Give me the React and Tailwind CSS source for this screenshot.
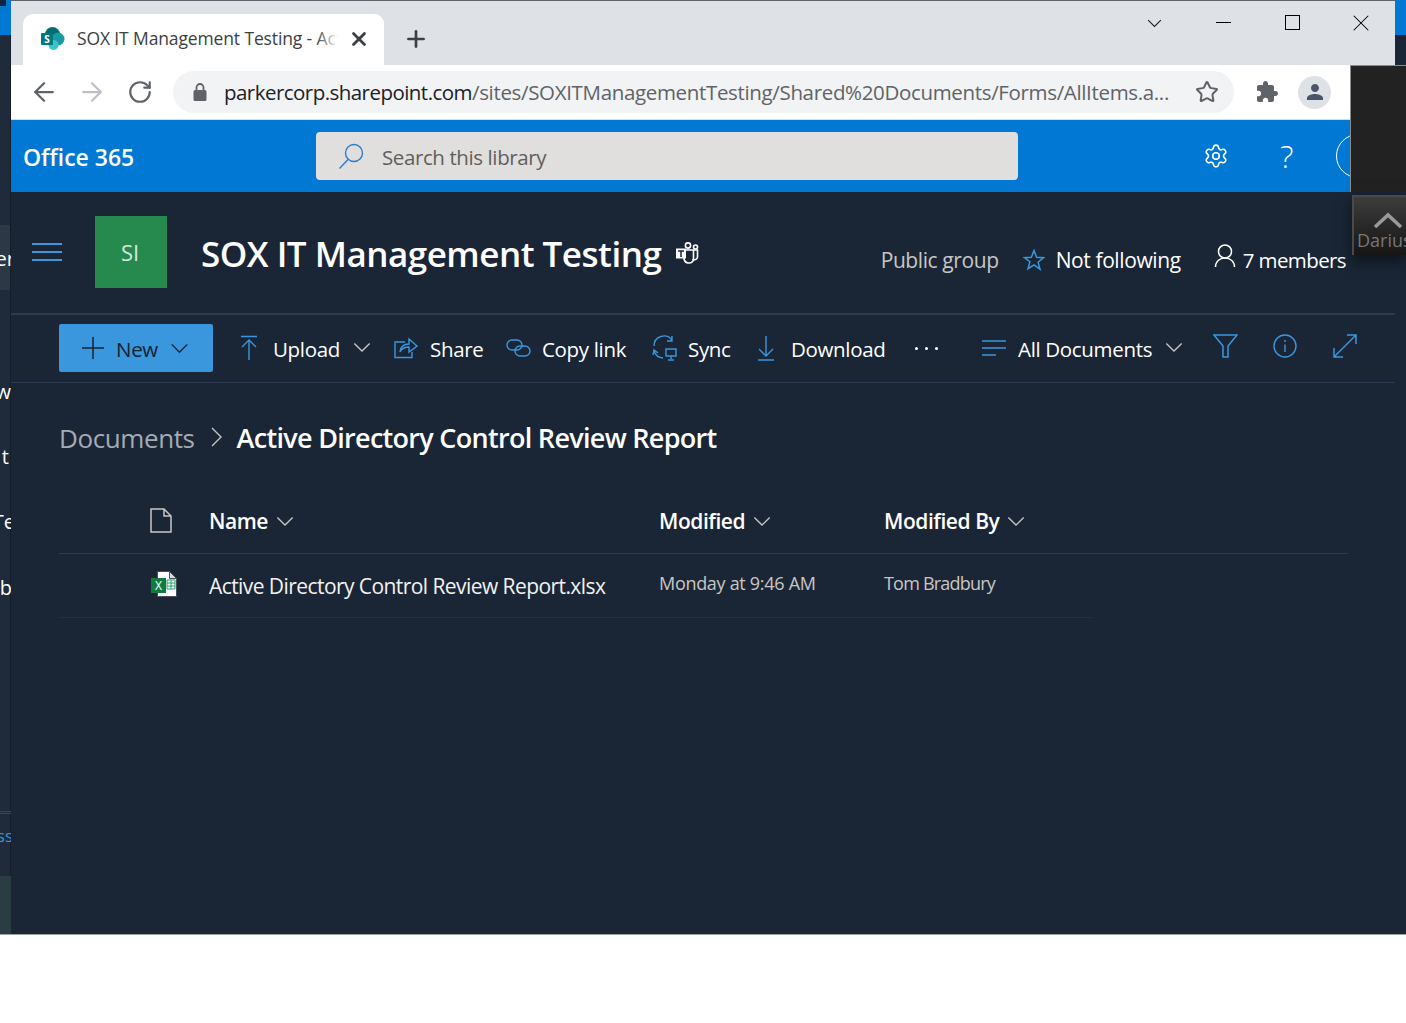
import { ArrowLeft, ArrowRight, RotateCw, Star, X, Plus, Settings } from "lucide-react"

const Chevron = ({ className = "" }) => (
  <svg viewBox="0 0 20 12" fill="none" stroke="currentColor" strokeWidth="1.5" className={className}>
    <path d="M1.5 1.5L10 10l8.5-8.5" />
  </svg>
)

const SharePointIcon = () => (
  <svg width="25" height="25" viewBox="0 0 25 25">
    <circle cx="12.5" cy="8.5" r="7.5" fill="#036c70" />
    <circle cx="18" cy="13" r="6.5" fill="#1a9ba1" />
    <circle cx="13.5" cy="19" r="5" fill="#37c6d0" />
    <rect x="1" y="7" width="12" height="12" rx="1" fill="#03787c" />
    <text x="7" y="16.5" fontSize="10" fontWeight="700" textAnchor="middle" fill="#fff" fontFamily="Open Sans">S</text>
  </svg>
)

const TeamsIcon = () => (
  <svg width="25" height="24" viewBox="0 0 25 24" fill="none" stroke="#fff" strokeWidth="1.6">
    <circle cx="13" cy="4.5" r="2.6" />
    <circle cx="20.5" cy="6" r="2" />
    <path d="M8 9h14.500v7a3 3 0 0 1-5 2" />
    <path d="M9 11v7a5 5 0 0 0 9.500 1V9" />
    <rect x="1" y="7.500" width="10" height="10" fill="#fff" stroke="none" />
    <path d="M3 10h6M6 10v6" stroke="#1a2636" strokeWidth="1.500" />
  </svg>
)

const ExcelIcon = () => (
  <svg width="28" height="27" viewBox="0 0 28 27">
    <path d="M7.500 .5h12l7 7v18h-19z" fill="#fff" stroke="#4a4f57" strokeWidth="1" />
    <path d="M19.500 .5v7h7z" fill="#d8dadd" stroke="#4a4f57" strokeWidth="1" />
    <path d="M17 9h8v9h-8z" fill="none" stroke="#21a366" strokeWidth="1" />
    <path d="M17 12h8M17 15h8M21 9v9" stroke="#21a366" strokeWidth="1" />
    <rect x="1" y="7" width="15" height="15" fill="#107c41" />
    <text x="8.500" y="19" fontSize="12" textAnchor="middle" fill="#fff" fontFamily="Open Sans">X</text>
  </svg>
)

const CommandItem = ({ icon, label, className, iconBox, chevron }) => (
  <div className={`flex items-center shrink-0 h-12 relative ${className}`}>
    <div className={`flex justify-start ${iconBox}`}>{icon}</div>
    <span className="mt-[2px] text-white text-[20.500px] tracking-[-0.33px] whitespace-nowrap">{label}</span>
    {chevron}
  </div>
)

const HeaderCell = ({ label, className = "" }) => (
  <div className={`flex items-center gap-[8px] shrink-0 ${className}`}>
    <span className="text-white text-[21px] font-semibold tracking-[-0.45px]">{label}</span>
    <Chevron className="w-[18px] h-[11px] text-[#c8c6c4]" />
  </div>
)

const App = () => {
  return (
    <div className="relative w-[1406px] h-[1023px] bg-white overflow-hidden font-['Open_Sans','Noto_Sans',sans-serif]">
      <div className="flex h-[935px] border-b border-[#9aa0a6]">

        {/* window behind, left edge */}
        <div className="relative w-[11px] shrink-0 bg-[#1f2b3a] overflow-hidden">
          <div className="h-[35px] bg-[#0078d4]" />
          <div className="absolute top-0 left-0 w-[6px] h-[6px] bg-[#10243c]" />
          <div className="absolute top-[225px] left-0 w-full h-[65px] bg-[#2c3845]" />
          <div className="absolute top-[35px] bottom-0 right-0 w-px bg-[#141d29]" />
          <span className="absolute top-[246px] -right-[4px] text-white text-[20px] leading-[26px]">er</span>
          <span className="absolute top-[379px] right-0 text-white text-[20px] leading-[26px]">w</span>
          <span className="absolute top-[444px] right-[2px] text-white text-[20px] leading-[26px]">t</span>
          <span className="absolute top-[509px] -right-[4px] text-white text-[20px] leading-[26px]">Te</span>
          <span className="absolute top-[575px] -right-[1px] text-white text-[20px] leading-[26px]">b</span>
          <div className="absolute top-[811px] left-0 w-full h-[3px] border-y border-[#3a4654]" />
          <span className="absolute top-[826px] -right-[2px] text-[#3a96dd] text-[17px] leading-[20px]">ss</span>
          <div className="absolute top-[876px] left-0 w-full h-[58px] bg-[#2a3d42]" />
        </div>

        {/* browser window */}
        <div className="w-[1384px] shrink-0 flex flex-col overflow-hidden border-t border-[#5f6368]">

          {/* tab strip */}
          <div className="h-[64px] bg-[#dee1e6] flex items-end pl-3 shrink-0">
            <div className="relative w-[361px] h-[51px] bg-white rounded-t-[10px] flex items-center pl-[17px] pb-[2px] overflow-hidden">
              <SharePointIcon />
              <span className="ml-3 text-[17.500px] text-[#3c4043] whitespace-nowrap tracking-[-0.13px]">SOX IT Management Testing - Active</span>
              <div className="absolute right-0 top-0 h-full w-[46px] flex items-center bg-white">
                <div className="w-[22px] h-full bg-gradient-to-r from-transparent to-white -ml-[22px] shrink-0" />
                <X size={22} strokeWidth={3} className="text-[#3c4043] ml-[10px] mb-[2px] shrink-0" />
              </div>
            </div>
            <div className="h-[51px] flex items-center pl-[19px] pb-[2px]">
              <Plus size={26} strokeWidth={2.500} className="text-[#3c4043]" />
            </div>
            <div className="flex-1 h-full flex items-start justify-end pt-[14px]">
              <Chevron className="w-[15px] h-[9px] mt-[4px] text-[#202124] mr-[54px]" />
              <div className="w-[15px] h-px bg-black mt-[7px] mr-[54px]" />
              <div className="w-[15px] h-[15px] border border-black mr-[47px]" />
              <X size={28} strokeWidth={0.900} className="text-black mr-[20px] -mt-[6px]" />
            </div>
          </div>

          {/* address bar */}
          <div className="h-[55px] bg-white border-b border-[#dadce0] flex items-center shrink-0">
            <ArrowLeft size={30} strokeWidth={1.800} className="text-[#5f6368] ml-[18px] shrink-0" />
            <ArrowRight size={30} strokeWidth={1.800} className="text-[#bdc1c6] ml-[18px] shrink-0" />
            <RotateCw size={26} strokeWidth={2} className="text-[#5f6368] ml-[20px] shrink-0" />
            <div className="ml-[20px] w-[1061px] h-[42px] rounded-full bg-[#f1f3f4] flex items-center pl-[20px] overflow-hidden shrink-0">
              <svg width="14" height="18" viewBox="0 0 14 18" fill="#5f6368" className="shrink-0">
                <path d="M2 7h10a1.500 1.500 0 0 1 1.500 1.500v8A1.500 1.500 0 0 1 12 18H2a1.500 1.500 0 0 1-1.500-1.500v-8A1.500 1.500 0 0 1 2 7z" />
                <path d="M3.500 7V4.500a3.500 3.500 0 0 1 7 0V7" fill="none" stroke="#5f6368" strokeWidth="1.800" />
              </svg>
              <span className="ml-[17px] w-[947px] text-[20.500px] whitespace-nowrap overflow-hidden">
                <span className="text-[#202124] tracking-[-0.54px]">parkercorp.sharepoint.com</span>
                <span className="text-[#5f6368] tracking-[-0.34px]">/sites/SOXITManagementTesting/Shared%20Documents/Forms/AllItems.a...</span>
              </span>
              <Star size={24} strokeWidth={2} className="text-[#5f6368] ml-[24px] shrink-0" />
            </div>
            <svg width="24" height="24" viewBox="0 0 24 24" fill="#5f6368" className="ml-[21px] shrink-0">
              <path d="M20.500 11H19V7c0-1.100-.9-2-2-2h-4V3.500C13 2.120 11.880 1 10.500 1S8 2.120 8 3.500V5H4c-1.100 0-1.990.9-1.990 2v3.800H3.500c1.490 0 2.700 1.210 2.700 2.700s-1.210 2.700-2.700 2.700H2V20c0 1.100.9 2 2 2h3.800v-1.500c0-1.490 1.210-2.700 2.700-2.700 1.490 0 2.700 1.210 2.700 2.700V22H17c1.100 0 2-.9 2-2v-4h1.500c1.380 0 2.500-1.120 2.500-2.500S21.880 11 20.500 11z" />
            </svg>
            <div className="ml-[19px] w-[33px] h-[33px] rounded-full bg-[#dee1e6] flex items-center justify-center shrink-0">
              <svg width="24" height="24" viewBox="0 0 24 24" fill="#4a5568">
                <path d="M12 12c2.210 0 4-1.790 4-4s-1.790-4-4-4-4 1.790-4 4 1.790 4 4 4zm0 2c-2.670 0-8 1.340-8 4v2h16v-2c0-2.660-5.330-4-8-4z" />
              </svg>
            </div>
          </div>

          {/* office bar */}
          <div className="h-[72px] bg-[#0078d4] flex items-center shrink-0">
            <span className="ml-3 mt-[2px] w-[293px] text-white text-[23px] font-semibold">Office 365</span>
            <div className="w-[702px] h-12 bg-[#e1dfdd] rounded-[4px] flex items-center pl-[22px] shrink-0">
              <svg width="27" height="27" viewBox="0 0 27 27" fill="none" stroke="#2b7cd3" strokeWidth="1.400">
                <circle cx="16" cy="10" r="8.500" />
                <path d="M10 16.500L1.500 25.500" />
              </svg>
              <span className="ml-[17px] mt-[2px] text-[20.500px] text-[#605e5c] tracking-[-0.4px]">Search this library</span>
            </div>
            <Settings size={26} strokeWidth={1.500} className="text-white ml-[185px] shrink-0" />
            <span className="ml-[51px] w-[24px] text-white text-[32px] font-light shrink-0">?</span>
            <div className="ml-[32px] w-[44px] h-[44px] rounded-full border border-white shrink-0" />
          </div>

          {/* dark content */}
          <div className="flex-1 bg-[#1a2636] flex flex-col min-h-0">

            {/* site header */}
            <div className="h-[123px] flex items-center border-b-2 border-[#2b3a4e] shrink-0 pb-[1px]">
              <div className="ml-[21px] w-[30px] flex flex-col gap-[6px] shrink-0">
                <div className="h-[2px] bg-[#3a96dd]" />
                <div className="h-[2px] bg-[#3a96dd]" />
                <div className="h-[2px] bg-[#3a96dd]" />
              </div>
              <div className="ml-[33px] w-[72px] h-[72px] bg-[#268a4f] flex items-center justify-center text-[#d5e8dc] text-[22px] shrink-0 pr-[2px]">SI</div>
              <span className="ml-[34px] mt-[4px] text-white text-[35px] font-semibold tracking-[-0.5px] whitespace-nowrap">SOX IT Management Testing</span>
              <div className="ml-[14px] mt-[2px] shrink-0"><TeamsIcon /></div>
              <div className="flex-1" />
              <span className="text-[#c8c6c4] text-[21px] tracking-[-0.4px] mt-[17px] whitespace-nowrap">Public group</span>
              <svg width="22" height="22" viewBox="0 0 22 22" fill="none" stroke="#3a96dd" strokeWidth="1.500" className="ml-[24px] mt-[15px] shrink-0">
                <path d="M11 1.500l2.600 6.800 7 .4-5.500 4.500 1.900 7L11 15.800l-6 3.900 1.900-7L1.400 8.700l7-.4z" />
              </svg>
              <span className="ml-[11px] mr-[1px] text-white text-[21px] tracking-[-0.4px] mt-[17px] whitespace-nowrap">Not following</span>
              <svg width="22" height="24" viewBox="0 0 22 24" fill="none" stroke="#fff" strokeWidth="1.500" className="ml-[32px] mt-[8px] shrink-0">
                <circle cx="11" cy="7.500" r="6.500" />
                <path d="M1.500 23c0-5.500 4-9 9.500-9s9.500 3.500 9.500 9" />
              </svg>
              <span className="ml-[7px] mr-[49px] text-white text-[20.500px] tracking-[-0.6px] mt-[17px] whitespace-nowrap">7 members</span>
            </div>

            {/* command bar */}
            <div className="h-[68px] flex items-center border-b border-[#2b3a4e] shrink-0 pl-[48px] pb-[1px]">
              <div className="w-[154px] h-12 bg-[#3a96dd] rounded-[2px] flex items-center pl-[23px] text-[#152233] shrink-0">
                <svg width="22" height="22" viewBox="0 0 22 22" fill="none" stroke="currentColor" strokeWidth="1.500" className="shrink-0"><path d="M11 0v22M0 11h22" /></svg>
                <span className="ml-[12px] mt-[2px] text-[20.500px] tracking-[-0.3px]">New</span>
                <Chevron className="w-[19px] h-[11px] ml-[12px]" />
              </div>
              <div className="w-[27px] shrink-0" />
              <CommandItem className="w-[154px]" iconBox="w-[33px]" label="Upload" icon={
                <svg width="18" height="26" viewBox="0 0 18 26" fill="none" stroke="#3a96dd" strokeWidth="1.400"><path d="M1 1.500h16M9 25V5M2 12l7-7 7 7" /></svg>
              } chevron={<Chevron className="absolute left-[113px] top-[18px] w-[18px] h-[11px] text-[#c8c6c4]" />} />
              <CommandItem className="w-[112px]" iconBox="w-[36px]" label="Share" icon={
                <svg width="24" height="22" viewBox="0 0 24 22" fill="none" stroke="#3a96dd" strokeWidth="1.400"><path d="M11 5H1v15.500h17V15" /><path d="M6 15c0-5 4-8 9-8V2l8 7-8 6v-5c-4 0-7 1-9 5z" /></svg>
              } />
              <CommandItem className="w-[146px]" iconBox="w-[36px]" label="Copy link" icon={
                <svg width="25" height="18" viewBox="0 0 25 18" fill="none" stroke="#3a96dd" strokeWidth="1.400"><rect x="1" y="1" width="15" height="10" rx="5" /><rect x="9" y="7" width="15" height="10" rx="5" /></svg>
              } />
              <CommandItem className="w-[105px]" iconBox="w-[36px]" label="Sync" icon={
                <svg width="26" height="26" viewBox="0 0 26 26" fill="none" stroke="#3a96dd" strokeWidth="1.400"><path d="M2 11a10 10 0 0 1 18-6M20 1v5h-5M11 23A10 10 0 0 1 2 16M1 20l1-5 4 3" /><path d="M14 14h10v7H14zM19 21v3M16 25h6" /></svg>
              } />
              <CommandItem className="w-[158px]" iconBox="w-[34px]" label="Download" icon={
                <svg width="18" height="26" viewBox="0 0 18 26" fill="none" stroke="#3a96dd" strokeWidth="1.400"><path d="M1 25h16M9 1v20M2 14l7 7 7-7" /></svg>
              } />
              <div className="w-[67px] shrink-0 flex gap-[7px] items-center">
                <div className="w-[3px] h-[3px] rounded-full bg-white" />
                <div className="w-[3px] h-[3px] rounded-full bg-white" />
                <div className="w-[3px] h-[3px] rounded-full bg-white" />
              </div>
              <CommandItem className="w-[231px]" iconBox="w-[36px]" label="All Documents" icon={
                <svg width="24" height="16" viewBox="0 0 24 16" fill="none" stroke="#3a96dd" strokeWidth="1.500"><path d="M0 1h24M0 8h24M0 15h14" /></svg>
              } chevron={<Chevron className="absolute left-[183px] top-[18px] w-[18px] h-[11px] text-[#c8c6c4]" />} />
              <svg width="25" height="24" viewBox="0 0 25 24" fill="none" stroke="#3a96dd" strokeWidth="1.500" className="shrink-0 -mt-1"><path d="M1 1h23l-9 11v11h-5V12z" /></svg>
              <svg width="24" height="24" viewBox="0 0 24 24" fill="none" stroke="#3a96dd" strokeWidth="1.400" className="shrink-0 ml-[35px] -mt-1"><circle cx="12" cy="12" r="11" /><path d="M12 10.500V18M12 6v2" /></svg>
              <svg width="24" height="24" viewBox="0 0 24 24" fill="none" stroke="#3a96dd" strokeWidth="1.500" className="shrink-0 ml-[36px] -mt-1"><path d="M1 23L23 1M14 1h9v9M1 14v9h9" /></svg>
            </div>

            {/* breadcrumb */}
            <div className="h-[107px] flex items-center pl-[48px] pt-[3px] shrink-0">
              <span className="text-[#a3abb5] text-[26px] tracking-[-0.4px]">Documents</span>
              <svg width="11" height="20" viewBox="0 0 11 20" fill="none" stroke="#c8c6c4" strokeWidth="1.400" className="ml-[16px] -mt-[2px] shrink-0"><path d="M1 1l9 9-9 9" /></svg>
              <span className="ml-[15px] text-white text-[27px] font-semibold tracking-[-0.7px] whitespace-nowrap">Active Directory Control Review Report</span>
            </div>

            {/* list header */}
            <div className="ml-[48px] w-[1289px] h-[64px] flex items-center border-b border-[#2b3a4e] shrink-0">
              <svg width="22" height="25" viewBox="0 0 22 25" fill="none" stroke="#c8c6c4" strokeWidth="1.500" className="ml-[91px] shrink-0 -mt-[2px]"><path d="M1 1h13l7 7v16H1zM14 1v7h7" /></svg>
              <div className="w-[37px] shrink-0" />
              <HeaderCell label="Name" className="w-[450px]" />
              <HeaderCell label="Modified" className="w-[225px]" />
              <HeaderCell label="Modified By" />
            </div>

            {/* row */}
            <div className="ml-[48px] w-[1033px] h-[64px] flex items-center border-b border-[#242f3f] shrink-0">
              <div className="ml-[91px] w-[59px] shrink-0 -mt-[2px]"><ExcelIcon /></div>
              <span className="w-[450px] shrink-0 mt-[2px] text-[#f3f2f1] text-[21px] tracking-[-0.57px] whitespace-nowrap">Active Directory Control Review Report.xlsx</span>
              <span className="w-[225px] shrink-0 text-[#c8c6c4] text-[18px] tracking-[-0.3px] -mt-[5px]">Monday at 9:46 AM</span>
              <span className="text-[#c8c6c4] text-[18px] tracking-[-0.8px] -mt-[5px]">Tom Bradbury</span>
            </div>
          </div>
        </div>

        {/* window behind, right edge */}
        <div className="w-[11px] shrink-0 bg-[#1a2636]">
          <div className="h-[35px] bg-[#0078d4]" />
        </div>
      </div>

      {/* overlapping dark panel on the right */}
      <div className="absolute left-[1350px] top-[65px] w-[56px] h-[127px] bg-[#222222] border-t border-l border-[#8a8a8a]" />
      <div className="absolute left-[1352px] top-[195px] w-[54px] h-[60px] bg-gradient-to-b from-[#3d3d3d] to-[#161616] border-l-2 border-t-2 border-[#4a4a4a] shadow-[0_6px_14px_rgba(0,0,0,0.5)] overflow-hidden">
        <svg width="30" height="16" viewBox="0 0 30 16" fill="none" stroke="#9a9a9a" strokeWidth="3.500" className="absolute left-[19px] top-[15px]"><path d="M2 15L15 3l13 12" /></svg>
        <span className="absolute left-[3px] top-[31px] text-[#777777] text-[18px] leading-[24px] whitespace-nowrap">Darius</span>
      </div>
    </div>
  )
}

export default App
